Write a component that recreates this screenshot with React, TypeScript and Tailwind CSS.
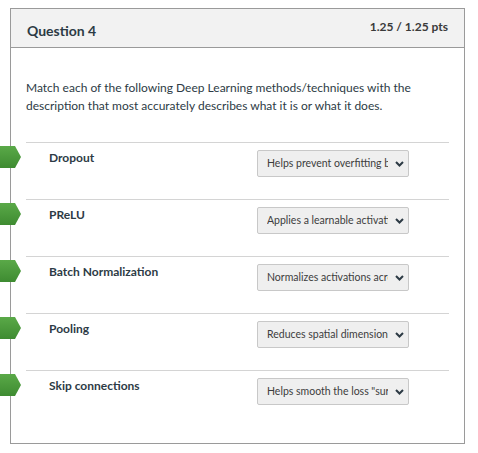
import React from 'react';

const rows = [
  { label: 'Dropout', answer: 'Helps prevent overfitting by randomly dropping units' },
  { label: 'PReLU', answer: 'Applies a learnable activation slope for negatives' },
  { label: 'Batch Normalization', answer: 'Normalizes activations across a mini-batch' },
  { label: 'Pooling', answer: 'Reduces spatial dimensions of feature maps' },
  { label: 'Skip connections', answer: 'Helps smooth the loss "surface" and gradient flow' },
];

const Arrow: React.FC = () => (
  <svg width="21" height="22" viewBox="0 0 21 22" className="absolute left-[-26px] top-[3px]">
    <defs>
      <linearGradient id="g" x1="0" y1="0" x2="0" y2="1">
        <stop offset="0" stopColor="#5aa948" />
        <stop offset="1" stopColor="#3e8b31" />
      </linearGradient>
    </defs>
    <polygon points="0,0 15,0 21,11 15,22 0,22" fill="url(#g)" />
  </svg>
);

const Chevron: React.FC = () => (
  <svg width="9" height="6" viewBox="0 0 9 6" className="shrink-0">
    <path d="M1 1 L4.5 4.5 L8 1" fill="none" stroke="#2d3b45" strokeWidth="2" />
  </svg>
);

export default function App() {
  return (
    <div className="bg-white w-[478px] h-[453px] pt-[8px] pl-[10px] font-['Lato',sans-serif] text-[#2d3b45]">
      <div className="w-[455px] h-[436px] border border-[#9a9a9a]">
        <div className="h-[39px] bg-[#f2f2f2] border-b border-[#9a9a9a] flex items-start justify-between px-[16px]">
          <span className="text-[14px] font-bold mt-[12px] leading-[20px]">Question 4</span>
          <span className="text-[12px] font-bold mt-[9px] leading-[18px] text-[#3a3a3a]">1.25 / 1.25 pts</span>
        </div>
        <div className="px-[15px]">
          <p className="text-[12px] leading-[18px] mt-[31px] mb-[27px]">
            Match each of the following Deep Learning methods/techniques with the description that most accurately describes what it is or what it does.
          </p>
          <div>
            {rows.map((r) => (
              <div key={r.label} className="relative h-[57px] border-t border-[#d4d4d4] flex items-start pl-[23px]">
                <Arrow />
                <span className="w-[208px] text-[12px] font-bold mt-[7px] leading-[16px]">{r.label}</span>
                <div className="mt-[7px] w-[152px] h-[27px] bg-[#efefef] border border-[#c8c8c8] rounded-[2px] flex items-center pl-[9px] pr-[4px] gap-[7px]">
                  <span className="flex-1 overflow-hidden whitespace-nowrap text-[10.5px] text-[#3d3d3d]">{r.answer}</span>
                  <Chevron />
                </div>
              </div>
            ))}
          </div>
        </div>
      </div>
    </div>
  );
}
